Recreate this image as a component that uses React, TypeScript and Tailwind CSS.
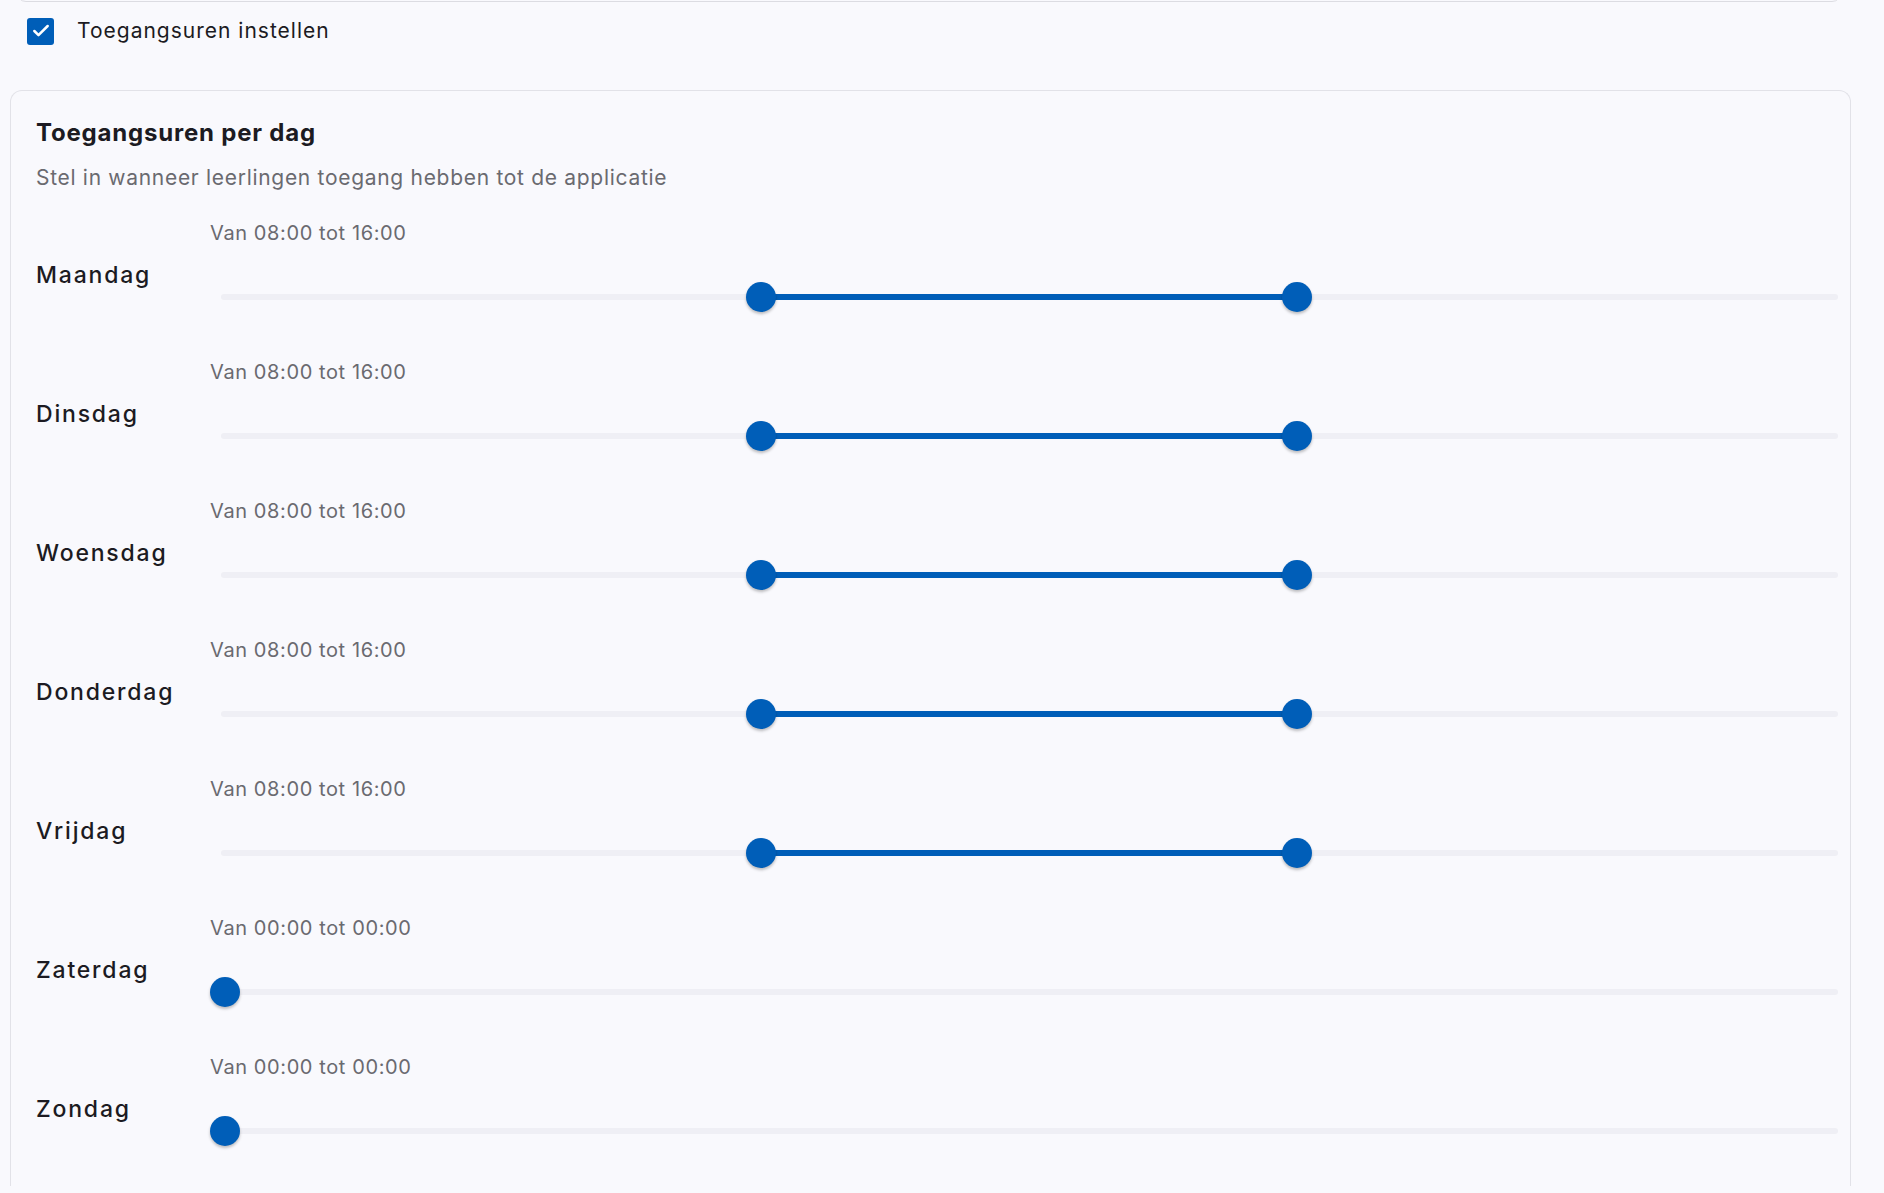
import { Check } from 'lucide-react';

type Day = { name: string; from: number; to: number };

const days: Day[] = [
  { name: 'Maandag', from: 8, to: 16 },
  { name: 'Dinsdag', from: 8, to: 16 },
  { name: 'Woensdag', from: 8, to: 16 },
  { name: 'Donderdag', from: 8, to: 16 },
  { name: 'Vrijdag', from: 8, to: 16 },
  { name: 'Zaterdag', from: 0, to: 0 },
  { name: 'Zondag', from: 0, to: 0 },
];

function hh(h: number) {
  return `${String(h).padStart(2, '0')}:00`;
}

function RangeSlider({ from, to }: { from: number; to: number }) {
  const a = (from / 24) * 100;
  const b = (to / 24) * 100;
  return (
    <div className="relative ml-[11px] mr-[12px] mt-[35px] h-[30px]">
      <div className="absolute left-0 right-0 top-[12px] h-[6px] rounded-full bg-[#efeff5]" />
      {/* thumbs sit on a slightly inset rail */}
      <div className="absolute inset-y-0 left-[4px] right-[5px]">
        {b > a && (
          <div
            className="absolute top-[12px] h-[6px] bg-[#005eb8]"
            style={{ left: `${a}%`, width: `${b - a}%` }}
          />
        )}
        <div
          className="absolute top-0 h-[30px] w-[30px] -translate-x-1/2 rounded-full bg-[#005eb8] shadow-[0_2px_3px_rgba(0,0,0,0.25)]"
          style={{ left: `${a}%` }}
        />
        {b > a && (
          <div
            className="absolute top-0 h-[30px] w-[30px] -translate-x-1/2 rounded-full bg-[#005eb8] shadow-[0_2px_3px_rgba(0,0,0,0.25)]"
            style={{ left: `${b}%` }}
          />
        )}
      </div>
    </div>
  );
}

export default function App() {
  return (
    <div className="min-h-screen overflow-hidden bg-[#f9f9fd] font-['Inter',sans-serif] text-[#1c1b22]">
      {/* bottom edge of the panel above */}
      <div className="ml-[16px] h-[2px] w-[1826px] overflow-hidden">
        <div className="-mt-[18px] h-[20px] rounded-[10px] border border-[#dcdce2]" />
      </div>

      <label className="ml-[27px] mt-[15px] flex items-center gap-[23px]">
        <span className="flex h-[27px] w-[27px] items-center justify-center rounded-[3px] bg-[#005eb8]">
          <Check className="h-[20px] w-[20px] text-white" strokeWidth={3} />
        </span>
        <span className="text-[21px] leading-[28px] tracking-[1px]">Toegangsuren instellen</span>
      </label>

      <div className="ml-[10px] mt-[45px] w-[1841px] rounded-t-[12px] border border-b-0 border-[#e2e2e8] pl-[25px] pt-[27px]">
        <h2 className="text-[24px] font-bold leading-[30px] tracking-[0.8px]">Toegangsuren per dag</h2>
        <p className="mt-[17px] text-[21px] leading-[26px] tracking-[0.7px] text-[#6a6a70]">
          Stel in wanneer leerlingen toegang hebben tot de applicatie
        </p>

        <div className="mt-[28px] flex flex-col gap-[46px] pb-[40px]">
          {days.map((d) => (
            <div key={d.name} className="flex items-start">
              <div className="mt-[41px] w-[174px] shrink-0 text-[23px] font-medium leading-[30px] tracking-[1.8px]">
                {d.name}
              </div>
              <div className="flex-1">
                <div className="text-[20px] leading-[28px] tracking-[0.6px] text-[#6a6a70]">
                  Van {hh(d.from)} tot {hh(d.to)}
                </div>
                <RangeSlider from={d.from} to={d.to} />
              </div>
            </div>
          ))}
        </div>
      </div>
    </div>
  );
}
